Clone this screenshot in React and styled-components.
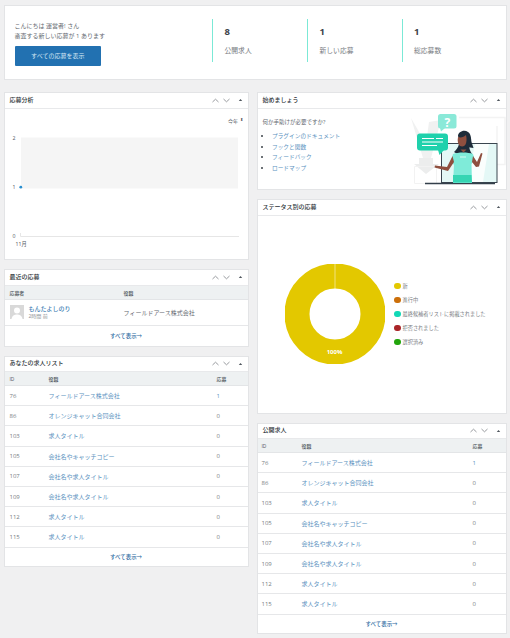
import React from "react";
import styled, { createGlobalStyle } from "styled-components";

const Global = createGlobalStyle`
  html, body { margin: 0; padding: 0; background: #f0f0f1; }
  body { font-family: "Open Sans", "Noto Sans CJK JP", sans-serif; color: #50575e; font-size: 6px; }
  * { box-sizing: border-box; }
  a { color: #3f7fb5; text-decoration: none; }
`;

const Page = styled.div`
  width: 510px; height: 638px; overflow: hidden;
  padding: 5px 3px 0 3.5px;
  display: flex; flex-direction: column; gap: 12px;
`;
const Card = styled.section`
  background: #fff; border: 1px solid #e3e4e6;
  display: grid; grid-template-columns: 207.5px 95px 94.5px 1fr;
  height: 75px; padding-top: 13px;
`;
const Welcome = styled.div`
  padding: 2px 0 0 10px; line-height: 10px; font-size: 6px; color: #646970;
  p { margin: 0; }
`;
const PrimaryButton = styled.a`
  display: flex; align-items: center; justify-content: center;
  width: 86.5px; height: 20px; margin-top: 5px;
  background: #2271b1; color: #d5e6f3; border-radius: 1px; font-size: 6px;
`;
const Stat = styled.div`
  height: 43px; border-left: 1.5px solid #7be9d6; padding: 7px 0 0 11.5px;
`;
const StatValue = styled.div`font-size: 9.5px; font-weight: 700; color: #3c434a; line-height: 12px;`;
const StatLabel = styled.div`font-size: 6.8px; color: #787c82; margin-top: 7.5px; line-height: 9px;`;

const Columns = styled.div`display: flex; gap: 8px; align-items: flex-start;`;
const Column = styled.div`
  width: ${p => p.$w}px; display: flex; flex-direction: column; gap: ${p => p.$gap}px;
`;
const Panel = styled.section`
  background: #fff; border: 1px solid #e3e4e6; height: ${p => p.$h}px;
  display: flex; flex-direction: column;
`;
const PanelHead = styled.header`
  height: 15.5px; flex: none; display: flex; align-items: center; justify-content: space-between;
  padding: 0 4.5px 0 5px; border-bottom: 1px solid #e8e9eb;
`;
const PanelTitle = styled.h2`
  margin: 0; font-size: 6px; font-weight: 500; color: #2c3338; line-height: 9px;
`;
const Handles = styled.div`display: flex; align-items: center; gap: 4.5px; color: #8c8f94;`;

const Up = ({ flip }) => (
  <svg width="7" height="5" viewBox="0 0 7 5" style={flip ? { transform: "scaleY(-1)" } : undefined}>
    <path d="M.5 4 3.500 1.200 6.500 4" fill="none" stroke="currentColor" strokeWidth=".9" />
  </svg>
);
const Tri = () => (
  <svg width="5" height="4" viewBox="0 0 5 4" style={{ marginLeft: 3.5 }}>
    <path d="M2.500 1 4.200 3H.8z" fill="#50575e" />
  </svg>
);
const Head = ({ title }) => (
  <PanelHead>
    <PanelTitle>{title}</PanelTitle>
    <Handles><Up /><Up flip /><Tri /></Handles>
  </PanelHead>
);

const ChartBody = styled.div`position: relative; flex: 1;`;
const YearSelect = styled.div`
  position: absolute; right: 5px; top: 8px; font-size: 5px; color: #50575e; display: flex; gap: 1.5px; align-items: center;
`;
const Sorter = styled.span`font-size: 4px; line-height: 4px; color: #2c3338;`;
const AxisLabel = styled.text`font-size: 5.2px; fill: #50575e; font-family: "Open Sans", "Noto Sans CJK JP", sans-serif;`;

const LineChart = () => (
  <svg width="243" height="151" viewBox="0 0 243 151" style={{ display: "block" }}>
    <rect x="16" y="28.500" width="217" height="51" fill="#f5f5f5" />
    <path d="M15.500 127.500V124M15.500 127.500H234" stroke="#e6e6e6" fill="none" />
    <AxisLabel x="7.500" y="31">2</AxisLabel>
    <AxisLabel x="7.500" y="80">1</AxisLabel>
    <AxisLabel x="7.500" y="128.500">0</AxisLabel>
    <AxisLabel x="10.500" y="136.500">11月</AxisLabel>
    <circle cx="15.800" cy="78.200" r="1.400" fill="#2a8fd0" />
  </svg>
);

const RowGrid = styled.div`
  display: grid; grid-template-columns: ${p => p.$cols};
  padding-left: ${p => p.$pad}px; align-items: center;
`;
const THead = styled(RowGrid)`
  height: ${p => p.$h || 14}px; background: #eef1f2; border-bottom: 1px solid #e3e5e7;
  font-size: 4.9px; font-weight: 500; color: #50575e;
`;
const TRow = styled(RowGrid)`
  height: 20.2px; border-bottom: 1px solid #e6e7e9; font-size: 6px; color: #787c82;
  a { font-size: 6px; color: #5b92c0; }
`;
const Count = styled.span`color: ${p => (p.$on ? "#5b92c0" : "#787c82")};`;
const FootLink = styled.a`
  flex: 1; display: flex; align-items: center; justify-content: center;
  font-size: 5.45px; font-weight: 500; color: #2f6da3;
`;
const RecentRow = styled(RowGrid)`
  height: 26.5px; border-bottom: 1px solid #e6e7e9; font-size: 6px; color: #646970;
`;
const Person = styled.div`display: flex; align-items: center; gap: 5px;`;
const Name = styled.a`display: block; font-size: 6px; font-weight: 500; color: #3f7fb5; line-height: 8px;`;
const Ago = styled.div`font-size: 5px; color: #8c8f94; line-height: 7px;`;

const Avatar = () => (
  <svg width="14" height="14" viewBox="0 0 14 14">
    <rect width="14" height="14" fill="#d9d9d9" />
    <circle cx="7" cy="5.500" r="3" fill="#fff" />
    <path d="M1.500 14c.5-3.500 3-4.600 5.500-4.600s5 1.100 5.500 4.600z" fill="#fff" />
  </svg>
);

const jobs = [
  [76, "フィールドアース株式会社", 1],
  [86, "オレンジキャット合同会社", 0],
  [103, "求人タイトル", 0],
  [105, "会社名やキャッチコピー", 0],
  [107, "会社名や求人タイトル", 0],
  [109, "会社名や求人タイトル", 0],
  [112, "求人タイトル", 0],
  [115, "求人タイトル", 0],
];

const JobsTable = ({ cols, pad }) => (
  <>
    <THead $cols={cols} $pad={pad}><span>ID</span><span>役職</span><span>応募</span></THead>
    {jobs.map(([id, t, n]) => (
      <TRow key={id} $cols={cols} $pad={pad}>
        <span>{id}</span><a href="#">{t}</a><Count $on={n > 0}>{n}</Count>
      </TRow>
    ))}
    <FootLink href="#">すべて表示→</FootLink>
  </>
);

const StartBody = styled.div`flex: 1; display: flex; justify-content: space-between; min-height: 0;`;
const StartText = styled.div`padding: 9px 0 0 5px; font-size: 5.5px; line-height: 9px; color: #646970;`;
const LinkList = styled.ul`
  margin: 4.500px 0 0; padding: 0 0 0 9.500px;
  li { line-height: 10.700px; font-size: 5.700px; color: #3c434a; }
  a { color: #5b92c0; }
`;

const Illustration = () => (
  <svg width="100" height="81" viewBox="5 13 100 81" style={{ flex: "none" }}>
    <path d="M10 22 25 48 28 26 40 24 30 62 22 62z" fill="#f0f1f1" />
    <path d="M18 62h14v6h6L25 78 13 68h5z" fill="#eceded" />
    <path d="M13.500 70.500h22v17h-22z" fill="none" stroke="#f2f2f2" />
    <path d="M58 21.500h46v47H96M96 30v18" fill="none" stroke="#f3f3f3" strokeWidth="1.500" />
    <rect x="37" y="18" width="18.500" height="14.500" rx="2.500" fill="#8ae9d8" />
    <path d="M39 32h5l-4 3.500z" fill="#8ae9d8" />
    <text x="46.300" y="30.500" textAnchor="middle" fontSize="12" fontWeight="700" fill="#fff" fontFamily="Open Sans, sans-serif">?</text>
    <rect x="40.500" y="47.500" width="55.500" height="39" fill="#e4f8f6" stroke="#3b4650" />
    <path d="M74 48 66 86H82L88 48z" fill="#fff" opacity=".8" />
    <path d="M24 87.500h70" stroke="#333f4a" strokeWidth="1.600" />
    <path d="M58 48c-1 4-3 6-5 8l5 3 13-1c-2-3-3-6-3-10z" fill="#1e2c3a" />
    <path d="M57 40c0-4 6-7 10-4 3 2 3 6 3.500 10l2 6-7-1-7-6z" fill="#1e2c3a" />
    <path d="M57 41c3 1 6 0 8-2 .8 3 .8 7-.5 9.500-1 2-3.500 2.500-5.500 1.500-2-1.500-2.800-5-2-9z" fill="#8f4f3f" />
    <path d="M52 58c5-2 15-2 20 0l1.500 5-3 5 .5 19H52l1-18-3-4z" fill="#7febd9" />
    <path d="M52 79h18.500l.5 7.500H52z" fill="#35d5b3" />
    <path d="M51.500 60 46 71 34 69.500l-.5 2L47 75l6-9zM72 60l4 6 4-9 1.500.5-3.500 13-3 .5-4-5z" fill="#8f4f3f" />
    <path d="M59.500 53.500l3 3 3-3z" fill="#8f4f3f" />
    <path d="M59 61h6" stroke="#fff" strokeWidth=".7" />
    <rect x="16" y="37.500" width="31" height="17" rx="3" fill="#1fd1ac" />
    <path d="M37 54h6l-4.500 5z" fill="#1fd1ac" />
    <path d="M21 42.500h12M35 42.500h7M21 46h21M21 49.500h15" stroke="#fff" strokeWidth="1" />
  </svg>
);

const StatusBody = styled.div`
  flex: 1; display: flex; align-items: center; gap: 9.500px; padding: 0 0 0 27px;
`;
const DonutBox = styled.div`position: relative; width: 100px; height: 100px; flex: none;`;
const DonutValue = styled.span`
  position: absolute; left: 0; right: 0; bottom: 8px; text-align: center;
  font-size: 6px; font-weight: 700; color: #fff; line-height: 7px;
`;
const Legend = styled.ul`
  list-style: none; margin: 0; padding: 0; display: flex; flex-direction: column; gap: 4.500px;
`;
const LegendItem = styled.li`
  display: flex; align-items: center; gap: 2px; height: 9.500px; font-size: 5.200px; color: #787c82;
  &::before { content: ""; width: 6.500px; height: 6.500px; border-radius: 50%; background: ${p => p.$c}; }
`;

const statuses = [
  ["新", "#e3c800"],
  ["進行中", "#cc6f0a"],
  ["最終候補者リストに掲載されました", "#12d8b6"],
  ["拒否されました", "#a92528"],
  ["選択済み", "#22a50c"],
];

export default function App() {
  const recentCols = "114px 1fr";
  return (
    <>
      <Global />
      <Page>
        <Card>
          <Welcome>
            <p>こんにちは 運営者! さん</p>
            <p>審査する新しい応募が 1 あります</p>
            <PrimaryButton href="#">すべての応募を表示</PrimaryButton>
          </Welcome>
          <Stat><StatValue>8</StatValue><StatLabel>公開求人</StatLabel></Stat>
          <Stat><StatValue>1</StatValue><StatLabel>新しい応募</StatLabel></Stat>
          <Stat><StatValue>1</StatValue><StatLabel>総応募数</StatLabel></Stat>
        </Card>
        <Columns>
          <Column $w={245} $gap={9}>
            <Panel $h={168}>
              <Head title="応募分析" />
              <ChartBody>
                <YearSelect>今年<Sorter>⬍</Sorter></YearSelect>
                <LineChart />
              </ChartBody>
            </Panel>
            <Panel $h={77.5}>
              <Head title="最近の応募" />
              <THead $cols={recentCols} $pad={5}><span>応募者</span><span>役職</span></THead>
              <RecentRow $cols={recentCols} $pad={5}>
                <Person>
                  <Avatar />
                  <div>
                    <Name href="#">もんたよしのり</Name>
                    <Ago>2時間 前</Ago>
                  </div>
                </Person>
                <span>フィールドアース株式会社</span>
              </RecentRow>
              <FootLink href="#">すべて表示→</FootLink>
            </Panel>
            <Panel $h={211}>
              <Head title="あなたの求人リスト" />
              <JobsTable cols="39px 168px 1fr" pad={5} />
            </Panel>
          </Column>
          <Column $w={250} $gap={9}>
            <Panel $h={98}>
              <Head title="始めましょう" />
              <StartBody>
                <StartText>
                  何か手助けが必要ですか?
                  <LinkList>
                    <li><a href="#">プラグインのドキュメント</a></li>
                    <li><a href="#">フックと関数</a></li>
                    <li><a href="#">フィードバック</a></li>
                    <li><a href="#">ロードマップ</a></li>
                  </LinkList>
                </StartText>
                <Illustration />
              </StartBody>
            </Panel>
            <Panel $h={214.5}>
              <Head title="ステータス別の応募" />
              <StatusBody>
                <DonutBox>
                  <svg width="100" height="100" viewBox="0 0 100 100">
                    <circle cx="50" cy="50" r="38" fill="none" stroke="#e3c800" strokeWidth="25" />
                    <path d="M50 0V25" stroke="#fff" strokeWidth=".5" />
                  </svg>
                  <DonutValue>100%</DonutValue>
                </DonutBox>
                <Legend>
                  {statuses.map(([t, c]) => <LegendItem key={t} $c={c}>{t}</LegendItem>)}
                </Legend>
              </StatusBody>
            </Panel>
            <Panel $h={211}>
              <Head title="公開求人" />
              <JobsTable cols="40px 171px 1fr" pad={4} />
            </Panel>
          </Column>
        </Columns>
      </Page>
    </>
  );
}
